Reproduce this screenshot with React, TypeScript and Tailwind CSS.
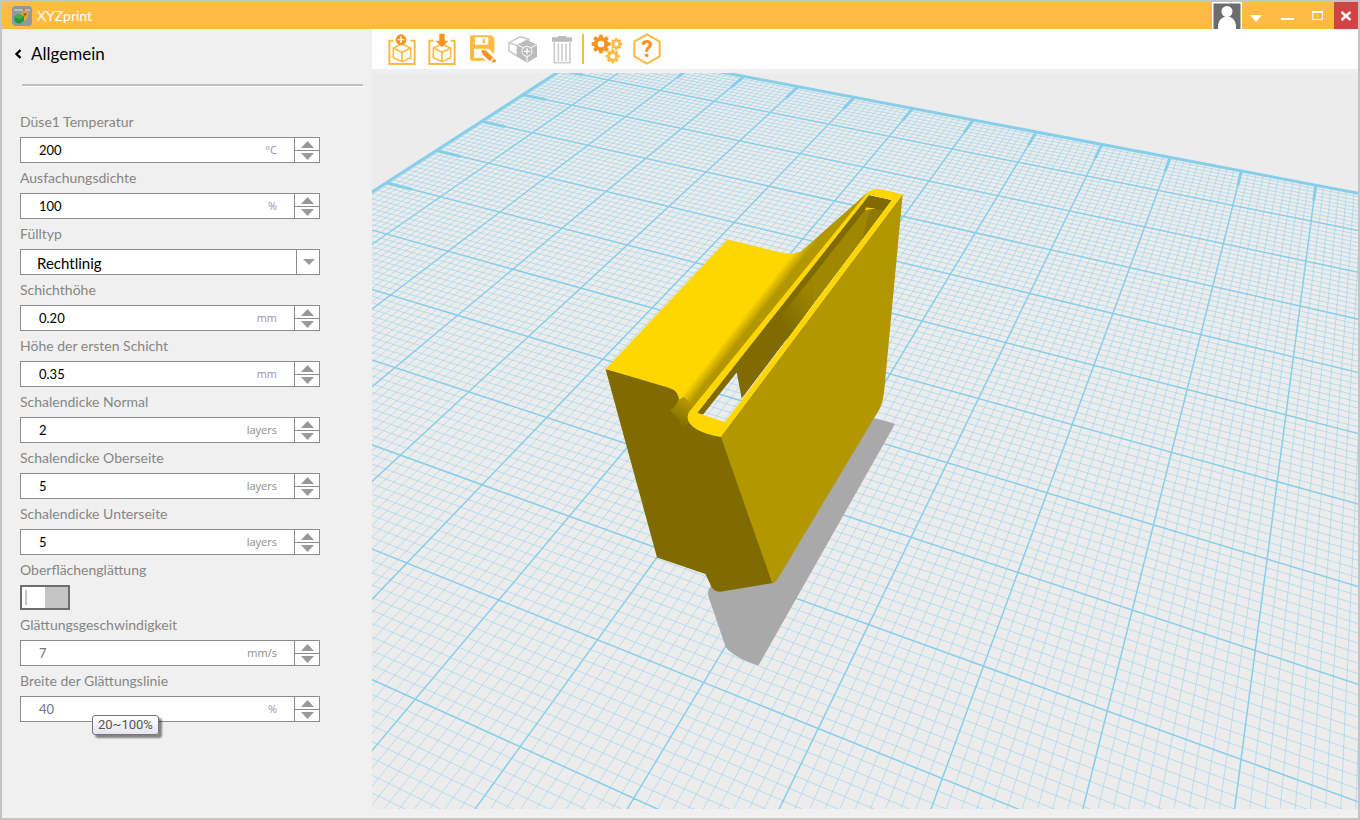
import React, { useState } from "react";

interface NumberSetting {
  id: string;
  label: string;
  value: string;
  unit: string;
  tinted?: boolean;
  muted?: boolean;
  hint?: string;
}

const topSettings: NumberSetting[] = [
  { id: "nozzle", label: "Düse1 Temperatur", value: "200", unit: "°C", tinted: true },
  { id: "density", label: "Ausfachungsdichte", value: "100", unit: "%", tinted: true },
];

const shellSettings: NumberSetting[] = [
  { id: "layer", label: "Schichthöhe", value: "0.20", unit: "mm", tinted: true },
  { id: "first", label: "Höhe der ersten Schicht", value: "0.35", unit: "mm", tinted: true },
  { id: "shell", label: "Schalendicke Normal", value: "2", unit: "layers" },
  { id: "shell-top", label: "Schalendicke Oberseite", value: "5", unit: "layers" },
  { id: "shell-bottom", label: "Schalendicke Unterseite", value: "5", unit: "layers" },
];

const smoothSettings: NumberSetting[] = [
  { id: "speed", label: "Glättungsgeschwindigkeit", value: "7", unit: "mm/s", muted: true },
  { id: "width", label: "Breite der Glättungslinie", value: "40", unit: "%", tinted: true, muted: true, hint: "20~100%" },
];

// Camera projection of a bed cell (column u, row v) onto the viewport
function project(u: number, v: number) {
  const w = 1 - 0.0172 * u - 0.04112 * v;
  const x = (592.69906 + 37.62414 * u - 57.62019 * v) / w;
  const y = (47.59813 + 8.27651 * u + 19.41083 * v) / w;
  return `${x.toFixed(1)} ${y.toFixed(1)}`;
}

const segment = (u1: number, v1: number, u2: number, v2: number) =>
  `M${project(u1, v1)}L${project(u2, v2)}`;

const LEFT = 0.05;
const COLS = 15;
const ROWS = 13;

function bedLines() {
  let minor = "";
  let major = "";
  let ticks = "";
  for (let i = 1; i <= COLS * 10; i++) {
    const line = segment(i / 10, 0, i / 10, ROWS);
    if (i % 10) minor += line;
    else {
      major += line;
      ticks += segment(i / 10, 0, i / 10, 0.45);
    }
  }
  for (let i = 1; i <= ROWS * 10; i++) {
    const line = segment(LEFT, i / 10, COLS, i / 10);
    if (i % 10) minor += line;
    else {
      major += line;
      ticks += segment(LEFT, i / 10, 0.5, i / 10);
    }
  }
  const edge = segment(LEFT, 0, COLS, 0) + segment(LEFT, 0, LEFT, ROWS);
  return { minor, major, ticks, edge };
}

function Viewport() {
  const { minor, major, ticks, edge } = bedLines();
  return (
    <svg viewBox="372 73 986 736" preserveAspectRatio="xMidYMid slice" className="block min-h-0 w-full flex-1 bg-[#ececec]">
      <defs>
        <linearGradient id="slope" gradientUnits="userSpaceOnUse" x1="736" y1="326" x2="745" y2="333">
          <stop offset="0" stopColor="#ffd700" />
          <stop offset="1" stopColor="#b39700" />
        </linearGradient>
        <linearGradient id="notch" gradientUnits="userSpaceOnUse" x1="688" y1="402" x2="676" y2="424">
          <stop offset="0" stopColor="#b39700" />
          <stop offset="1" stopColor="#806b00" />
        </linearGradient>
        <linearGradient id="inner" gradientUnits="userSpaceOnUse" x1="780" y1="320" x2="813" y2="300">
          <stop offset="0" stopColor="#806b00" />
          <stop offset="1" stopColor="#9c8400" />
        </linearGradient>
        <clipPath id="slot">
          <path d="M697 413L725 422L892 200L869 195Z" />
        </clipPath>
      </defs>

      <g fill="none" stroke="#87ceeb">
        <path d={minor} strokeWidth="1" strokeOpacity="0.5" />
        <path d={major} strokeWidth="1.5" />
        <path d={ticks} strokeWidth="3" />
        <path d={edge} strokeWidth="3" />
      </g>

      {/* Shadow on the bed */}
      <path d="M870 418Q880 419 895 424L758.500 665.500Q740 660 728 650Q725.500 647 724 642L708.300 596Q707 588 714 584Z" fill="#a9a9a9" />

      {/* Side and front faces */}
      <path d="M605.500 369L657 557.500L705.500 574L711 586Q714 592 720 591.700L773 583L722 436L700 430L690 420L690 396L668 386Z" fill="#806b00" />
      <path d="M720.700 436.500L902.700 194.300L884 393Q883 402 879.500 409L777 580Q775 583.500 772 582.500Z" fill="#b39700" />

      {/* Upper faces */}
      <path d="M605.500 369L727.500 239.500L781 252.500Q793 255 801 251.500L867 193L869 195L697 413L689 413L679 406Q681 391 668 387.500Z" fill="url(#slope)" />
      <path d="M678 400L684 397L694 408L688 424L683 430Q679 430 680 421L670 410Q677 406 678 400Z" fill="url(#notch)" />

      {/* Slot walls and rim */}
      <g clipPath="url(#slot)">
        <path d="M697 413L869 195L892 200L741.700 398.500L736.700 372.500L702.700 415Z" fill="#806b00" />
        <path d="M781.500 315L811.500 277.500L813 304L787 342Z" fill="url(#inner)" />
        <path d="M811.500 277.500L866 209L884 211L813 304Z" fill="#9f8700" />
        <path d="M870 209L884 210L862 240Z" fill="#8f7900" />
        <path d="M866 207.500L876 208.500L865 210Z" fill="#ffd700" />
      </g>
      <path
        fillRule="evenodd"
        fill="#ffd700"
        d="M689 412L867 193Q871 189 880 189L902.700 194.300L720.700 437Q705 434 697 429.500Q684 422 689 412ZM697 413L725 422L892 200L869 195Z"
      />
    </svg>
  );
}

function Spinner({ label }: { label: string }) {
  return (
    <div className="flex w-[25px] flex-col border-l border-[#8c8c8c]">
      <button type="button" aria-label={`${label} +`} className="flex h-[13px] items-center justify-center border-b border-[#8c8c8c]">
        <svg viewBox="0 0 13 7" className="h-[7px] w-[13px]">
          <path d="M0 7L6.500 0L13 7Z" fill="#999" />
        </svg>
      </button>
      <button type="button" aria-label={`${label} -`} className="flex h-[11px] items-center justify-center">
        <svg viewBox="0 0 13 7" className="h-[7px] w-[13px]">
          <path d="M0 0L6.500 7L13 0Z" fill="#999" />
        </svg>
      </button>
    </div>
  );
}

function NumberField({ setting }: { setting: NumberSetting }) {
  const [value, setValue] = useState(setting.value);
  return (
    <div className="relative">
      <label htmlFor={setting.id} className="block text-sm leading-[30px] text-[#868686]">
        {setting.label}
      </label>
      <div className="flex h-[26px] border border-[#8c8c8c] bg-white">
        <input
          id={setting.id}
          value={value}
          onChange={(e) => setValue(e.target.value)}
          className={`min-w-0 flex-1 pt-[2px] pl-[18px] text-[13px] outline-none ${setting.muted ? "text-[#777]" : "text-black"}`}
        />
        <span className={`pr-[17px] font-['Open_Sans'] text-[11px] leading-6 ${setting.tinted ? "text-[#9494b8]" : "text-[#8c8c8c]"}`}>
          {setting.unit}
        </span>
        <Spinner label={setting.label} />
      </div>
      {setting.hint && (
        <div
          role="tooltip"
          className="absolute top-[49px] left-[72px] rounded-[3px] border border-[#767676] bg-gradient-to-b from-white to-[#e4e5f0] px-[5px] font-[Roboto] text-[13px] leading-[18px] text-[#555] shadow-[3px_3px_2px_rgba(0,0,0,0.45)]"
        >
          {setting.hint}
        </div>
      )}
    </div>
  );
}

function SettingsPanel() {
  const [smooth, setSmooth] = useState(false);
  return (
    <aside className="w-[370px] shrink-0 bg-[#f0f0f0]">
      <header className="flex h-[50px] items-center pl-3">
        <button type="button" aria-label="Zurück" className="w-[17px]">
          <svg viewBox="0 0 8 10" className="h-[10px] w-2">
            <path d="M6.500 1L2.500 5L6.500 9" fill="none" stroke="#000" strokeWidth="2.400" />
          </svg>
        </button>
        <h1 className="text-[17px] text-black">Allgemein</h1>
      </header>
      <hr className="mt-[5px] mr-[9px] ml-5 h-[3px] border-t-2 border-b border-t-[#bfbfbf] border-b-white" />
      <form className="mt-5 ml-[18px] w-[300px]">
        {topSettings.map((s) => (
          <NumberField key={s.id} setting={s} />
        ))}
        <label htmlFor="fill" className="block text-sm leading-[30px] text-[#868686]">
          Fülltyp
        </label>
        <div className="relative">
          <select id="fill" className="h-[26px] w-full appearance-none border border-[#8c8c8c] bg-white pt-[2px] pl-4 text-[15px] text-black outline-none">
            <option>Rechtlinig</option>
          </select>
          <span className="pointer-events-none absolute inset-y-0 right-0 flex w-6 items-center justify-center border-l border-[#8c8c8c]">
            <svg viewBox="0 0 12 6" className="h-[6px] w-3">
              <path d="M0 0L6 6L12 0Z" fill="#999" />
            </svg>
          </span>
        </div>
        {shellSettings.map((s) => (
          <NumberField key={s.id} setting={s} />
        ))}
        <label htmlFor="smooth" className="block text-sm leading-[30px] text-[#868686]">
          Oberflächenglättung
        </label>
        <label className={`flex h-[25px] w-[50px] border-2 border-[#6e6e6e] bg-[#c5c5c5] ${smooth ? "justify-end" : ""}`}>
          <input id="smooth" type="checkbox" checked={smooth} onChange={() => setSmooth(!smooth)} className="sr-only" />
          <span className="flex w-[23px] items-center bg-white pl-[3px]">
            <span className="h-[15px] w-[2px] bg-[#c8c8c8]" />
          </span>
        </label>
        {smoothSettings.map((s) => (
          <NumberField key={s.id} setting={s} />
        ))}
      </form>
    </aside>
  );
}

function ToolButton({ label, viewBox, children }: { label: string; viewBox: string; children: React.ReactNode }) {
  return (
    <button type="button" aria-label={label} className="size-10 shrink-0">
      <svg viewBox={viewBox} className="size-10" fill="none">
        {children}
      </svg>
    </button>
  );
}

function Gear({ cx, cy, r, color }: { cx: number; cy: number; r: number; color: string }) {
  return (
    <g stroke={color}>
      <circle cx={cx} cy={cy} r={r * 0.57} strokeWidth={r * 0.42} />
      {[0, 45, 90, 135, 180, 225, 270, 315].map((a) => (
        <path key={a} d={`M${cx} ${cy - r * 0.7}V${cy - r}`} strokeWidth={r * 0.4} transform={`rotate(${a} ${cx} ${cy})`} />
      ))}
    </g>
  );
}

function Toolbar() {
  return (
    <div className="flex h-10 items-center bg-white pl-[10px]">
      <ToolButton label="Neu" viewBox="6 3 120 120">
        <path d="M40 38H28V108H104V38H92" stroke="#ffba43" strokeWidth="6" />
        <path d="M66 48L92 60V89L66 101L40 89V60ZM40 60L66 73L92 60M66 73V101" stroke="#ffba43" strokeWidth="5" />
        <circle cx="63" cy="35" r="16" fill="#f7931e" />
        <path d="M63 25V45M53 35H73" stroke="#fff" strokeWidth="4" />
      </ToolButton>
      <ToolButton label="Importieren" viewBox="126 3 120 120">
        <path d="M160 38H148V108H224V38H212" stroke="#ffba43" strokeWidth="6" />
        <path d="M186 48L212 60V89L186 101L160 89V60ZM160 60L186 73L212 60M186 73V101" stroke="#ffba43" strokeWidth="5" />
        <path d="M178 17H194V38H205L186 58L167 38H178Z" fill="#f7931e" />
      </ToolButton>
      <ToolButton label="Speichern" viewBox="246 3 120 120">
        <path
          fillRule="evenodd"
          fill="#ffba43"
          d="M274 22H334L343 31V78L325 62H282V90H308L318 98H274Q270 98 270 94V26Q270 22 274 22ZM285 28V50H325V28Z"
        />
        <path d="M308 33H315V46H308Z" fill="#ffba43" />
        <path d="M304 66L317 67L340 89L329 99L307 78Z" fill="#f7931e" />
        <path d="M343 92L348 97Q349 103 341 104L334 101Z" fill="#f7931e" />
      </ToolButton>
      <ToolButton label="Info" viewBox="366 3 120 120">
        <path d="M387 44L420 26L447 34L413 53ZM387 44V69L412 84V53M447 34V44" stroke="#cdcdcd" strokeWidth="5" strokeLinejoin="round" />
        <path d="M441 36L471 50V86L441 104L411 86V50Z" fill="#bcbcbc" />
        <path d="M413 51L441 64L469 51M441 64V102" stroke="#fff" strokeWidth="3" />
        <circle cx="441" cy="70" r="15" fill="#bcbcbc" stroke="#fff" strokeWidth="3" />
        <path d="M441 61V79M432 70H450" stroke="#fff" strokeWidth="4" />
      </ToolButton>
      <ToolButton label="Löschen" viewBox="486 3 120 120">
        <path d="M516 28H534V24H558V28H576V41H516Z" fill="#bcbcbc" />
        <path d="M523 43V104H570V43M535 47V99M546 47V99M558 47V99" stroke="#cdcdcd" strokeWidth="5" />
      </ToolButton>
      <span className="mr-[3px] h-[30px] w-[2px] bg-[#ffba43]" />
      <ToolButton label="Einstellungen" viewBox="621 3 120 120">
        <Gear cx={663} cy={48} r={28} color="#f7931e" />
        <Gear cx={709} cy={48} r={18} color="#ffba43" />
        <Gear cx={698} cy={85} r={21} color="#ffba43" />
      </ToolButton>
      <ToolButton label="Hilfe" viewBox="741 3 120 120">
        <path d="M801 19L839 41V85L801 107L763 85V41Z" stroke="#ffba43" strokeWidth="6" />
        <text x="801" y="87" textAnchor="middle" fill="#f7931e" className="font-[Roboto] text-[70px] font-bold">
          ?
        </text>
      </ToolButton>
    </div>
  );
}

function TitleBar() {
  return (
    <div className="flex h-[27px] items-center bg-[#ffbb42] pl-[10px] text-white">
      <svg viewBox="0 0 20 20" className="size-5">
        <rect width="20" height="20" rx="4" fill="#909a9c" />
        <path d="M2 3H18V5H2Z" fill="#b5bdbe" />
        <path d="M9 7L12 5L17 6L15 13L12 15Z" fill="#e6a72e" />
        <path d="M11 7L15 7L13 11Z" fill="#8d6a2a" />
        <path d="M11 2H13V5H11Z" fill="#e06a4a" />
        <path d="M2 11L6 8L12 10V15L7 18L3 16Z" fill="#2a9440" />
        <path d="M2 11L6 8L12 10L8 13Z" fill="#43b052" />
      </svg>
      <span className="ml-[5px] text-sm">XYZprint</span>
      <div className="ml-auto flex h-full">
        <button type="button" aria-label="Konto" className="w-[30px]">
          <svg viewBox="0 0 30 27" className="h-[27px] w-[30px]">
            <path d="M0 0H30V27H0Z" fill="#fff" />
            <path d="M1.500 1.500H28.500V27H1.500Z" fill="#6d6d6d" />
            <circle cx="15" cy="9.500" r="5.500" fill="#fff" />
            <path d="M6 27V23Q7 15 15 14.500Q23 15 24 23V27Z" fill="#fff" />
          </svg>
        </button>
        <button type="button" aria-label="Menü" className="flex w-[27px] items-center justify-center pt-[5px]">
          <svg viewBox="0 0 12 7" className="h-[7px] w-3">
            <path d="M0 0H12L6 7Z" fill="#fff" />
          </svg>
        </button>
        <button type="button" aria-label="Minimieren" className="flex w-[37px] items-center justify-center pt-[7px]">
          <span className="h-[2px] w-[13px] bg-white" />
        </button>
        <button type="button" aria-label="Maximieren" className="flex w-7 items-center justify-start pl-[6px]">
          <span className="h-[9px] w-[11px] border border-t-2 border-white" />
        </button>
        <button type="button" aria-label="Schließen" className="flex w-6 items-center justify-center bg-[#d04543]">
          <svg viewBox="0 0 12 10" className="h-[10px] w-3">
            <path d="M1.500 1L10.500 9M10.500 1L1.500 9" stroke="#fff" strokeWidth="2.400" />
          </svg>
        </button>
      </div>
    </div>
  );
}

export default function App() {
  return (
    <div className="flex min-h-screen flex-col border-2 border-[#c4c4c4] bg-[#f0f0f0] font-[Lato,'Open_Sans',sans-serif]">
      <TitleBar />
      <div className="flex flex-1">
        <SettingsPanel />
        <main className="flex min-w-0 flex-1 flex-col gap-1 pb-[9px]">
          <Toolbar />
          <Viewport />
        </main>
      </div>
    </div>
  );
}
